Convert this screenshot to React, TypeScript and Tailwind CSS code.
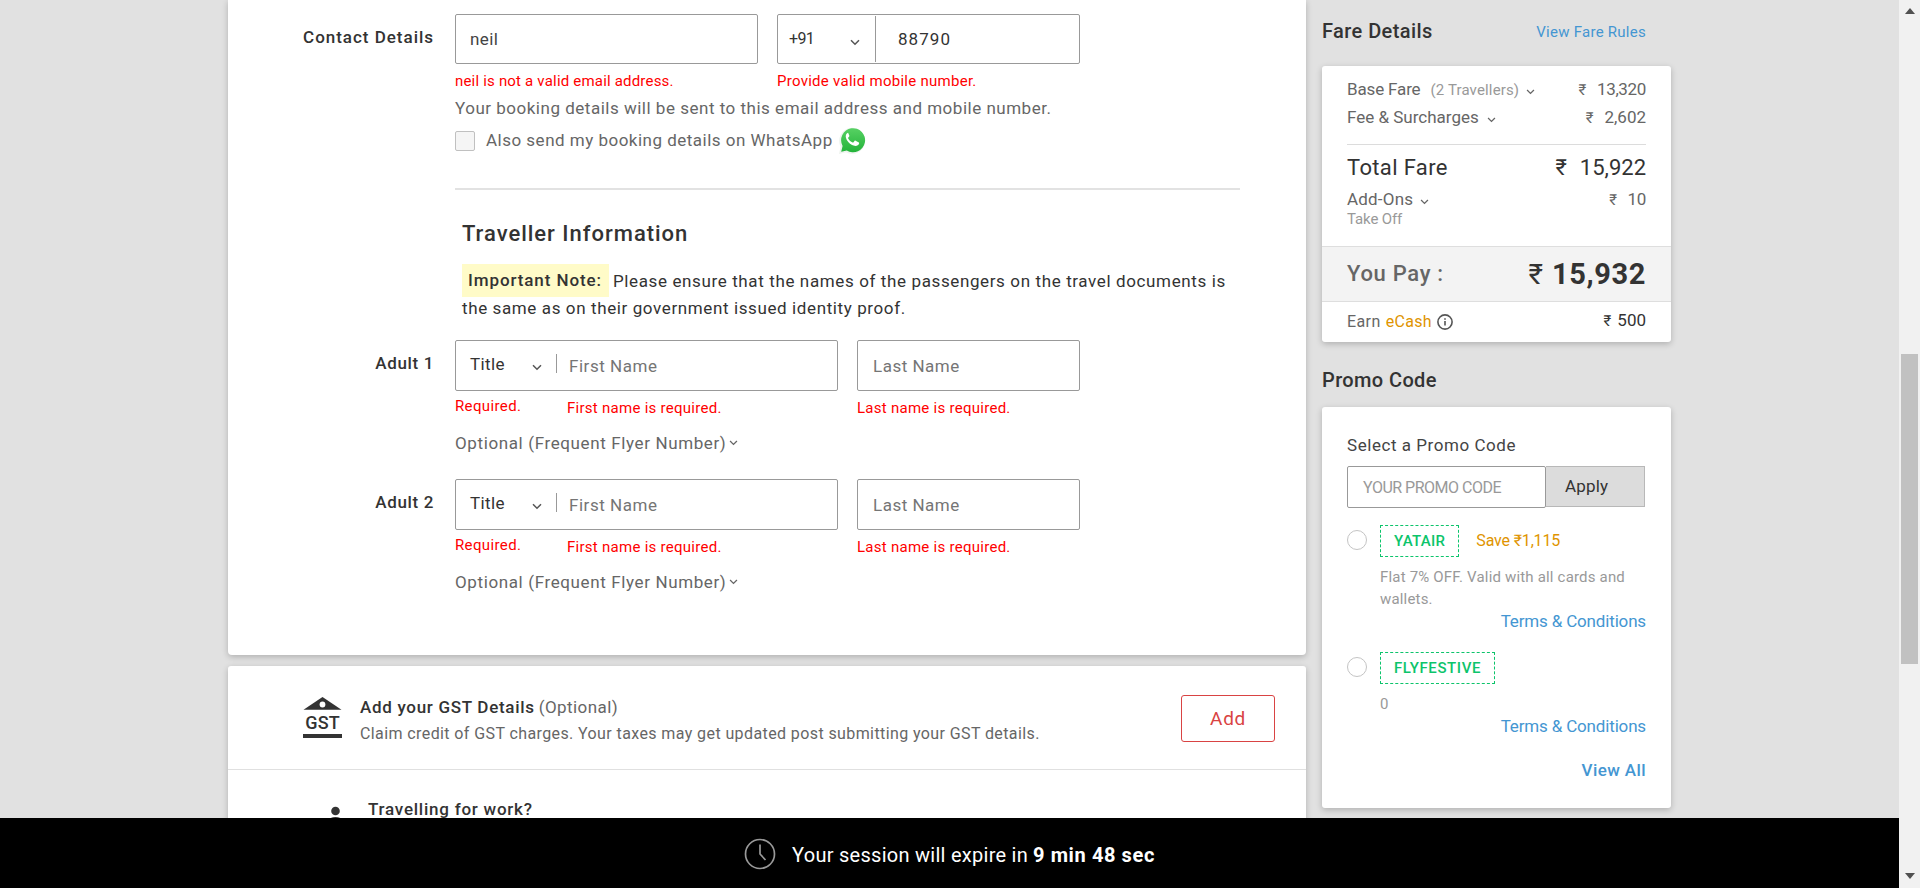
import type { ReactNode } from "react";

function Chevron({ className = "" }: { className?: string }) {
  return (
    <svg viewBox="0 0 10 7" fill="none" stroke="currentColor" strokeWidth="1.5" className={`shrink-0 ${className}`}>
      <path d="M1 1.2 5 5.2 9 1.2" />
    </svg>
  );
}

function WhatsApp() {
  return (
    <svg viewBox="0 0 28 29" className="ml-[5px] h-[29px] w-[28px] shrink-0">
      <defs>
        <linearGradient id="wa" x1="0" y1="0" x2="0" y2="1">
          <stop offset="0" stopColor="#57d163" />
          <stop offset="1" stopColor="#23b33a" />
        </linearGradient>
      </defs>
      <path d="M1 28 2.6 20.8A13 13 0 1 1 8 26.3Z" fill="#edf3ee" />
      <path d="M3.2 25.8 4.6 20A12 12 0 1 1 8.8 24.4Z" fill="url(#wa)" />
      <path
        d="M10.300 6.800c-.5 0-1 .2-1.500.8-1.500 1.700-1.300 3.900 0 6.400 1.800 2.900 4.200 4.900 7.600 5.800 1.900.5 4.400-.6 4.700-2.300.1-.5.1-.9-.2-1.100l-3.300-1.700c-.4-.2-.8-.1-1.100.3l-1 1.300c-.3.3-.5.3-.9.1-1.900-.8-3.400-2.200-4.400-4-.2-.3-.1-.6.1-.8l.9-1.100c.2-.3.2-.6.1-.9l-1.200-2.900c-.2-.4-.5-.6-.9-.6Z"
        fill="#fff"
      />
    </svg>
  );
}

function Traveller({ label, className }: { label: string; className: string }) {
  return (
    <section className={`flex ${className}`}>
      <div className="mt-[11px] w-[206px] shrink-0 text-right font-medium leading-6 tracking-[0.64px] text-[#333]">{label}</div>
      <div className="ml-[21px]">
        <div className="flex gap-[19px]">
          <div>
            <div className="flex h-[51px] w-[383px] rounded-[2px] border border-[#999]">
              <span className="ml-[14px] mt-[11px] w-[62px] leading-6 tracking-[0.4px] text-[#333]">Title</span>
              <Chevron className="mt-[23px] h-[7px] w-[10px] text-[#555]" />
              <span className="ml-[14px] mt-[13px] h-[19px] w-px bg-[#999]" />
              <span className="ml-[12px] mt-[13px] leading-6 tracking-[0.54px] text-[#757575]">First Name</span>
            </div>
            <div className="flex h-[27px] text-[15px] leading-5 text-[#f00]">
              <span className="mt-[5px] w-[112px] tracking-[0.38px]">Required.</span>
              <span className="mt-[7px] tracking-[0.27px]">First name is required.</span>
            </div>
          </div>
          <div>
            <div className="flex h-[51px] w-[223px] rounded-[2px] border border-[#999]">
              <span className="ml-[15px] mt-[13px] leading-6 tracking-[0.5px] text-[#757575]">Last Name</span>
            </div>
            <div className="mt-[7px] text-[15px] leading-5 tracking-[0.27px] text-[#f00]">Last name is required.</div>
          </div>
        </div>
        <div className="mt-[13px] flex leading-6 tracking-[0.62px]">
          Optional (Frequent Flyer Number)
          <Chevron className="ml-[3px] mt-[9px] h-[6px] w-[9px]" />
        </div>
      </div>
    </section>
  );
}

function Amount({ value, className = "" }: { value: string; className?: string }) {
  return (
    <span className={`flex items-baseline ${className}`}>
      <span className="mr-[11px] text-[15px]">₹</span>
      {value}
    </span>
  );
}

function Promo({ code, note, save, className }: { code: ReactNode; note: string; save?: string; className: string }) {
  return (
    <div className={className}>
      <div className="flex h-8 items-center">
        <span className="-mt-[2px] size-5 rounded-full border border-[#c4c4c4] bg-white" />
        <span className="ml-[13px] flex h-8 items-center border border-dashed border-[#0cc46b] px-[13px] text-[15px] font-medium text-[#0cc46b]">
          {code}
        </span>
        {save && <span className="ml-[17px] text-[16px] tracking-[-0.16px] text-[#e09400]">{save}</span>}
      </div>
      <p className="ml-[33px] mt-[9px] w-[264px] text-[15px] leading-[22px] tracking-[0.18px] text-[#999]">{note}</p>
      <div className="-mt-px text-right leading-6 tracking-[-0.16px] text-[#4496d2]">Terms &amp; Conditions</div>
    </div>
  );
}

export default function App() {
  return (
    <div className="flex h-[888px] w-full overflow-hidden bg-[#e1e1e1] font-['Roboto','Open_Sans',sans-serif] text-[17px] text-[#666]">
      <div className="flex min-w-0 flex-1 flex-col">
        <div className="flex h-[818px] items-start overflow-hidden pl-[228px]">
          <main className="w-[1078px] shrink-0">
            <div className="h-[655px] rounded-b-[4px] bg-white pt-[14px] shadow-[0_2px_6px_rgba(0,0,0,0.22)]">
              <section className="flex">
                <div className="mt-[11px] w-[206px] shrink-0 text-right font-medium leading-6 tracking-[0.98px] text-[#333]">
                  Contact Details
                </div>
                <div className="ml-[21px] w-[785px]">
                  <div className="flex gap-[19px]">
                    <div className="w-[303px]">
                      <div className="h-[50px] rounded-[2px] border border-[#999] pl-[14px] leading-[48px] tracking-[0.44px] text-[#444]">neil</div>
                      <div className="mt-[7px] whitespace-nowrap text-[15px] leading-5 tracking-[0.19px] text-[#f00]">
                        neil is not a valid email address.
                      </div>
                    </div>
                    <div className="w-[303px]">
                      <div className="flex h-[50px] rounded-[2px] border border-[#999] leading-[48px] text-[#333]">
                        <span className="ml-[11px] w-[61px] text-[16px] tracking-[-0.6px]">+91</span>
                        <Chevron className="mt-[24px] h-[7px] w-[10px] text-[#555]" />
                        <span className="ml-[15px] mt-px h-[46px] w-px bg-[#999]" />
                        <span className="ml-[22px] tracking-[1.05px]">88790</span>
                      </div>
                      <div className="mt-[7px] text-[15px] leading-5 tracking-[0.27px] text-[#f00]">Provide valid mobile number.</div>
                    </div>
                  </div>
                  <div className="mt-[5px] leading-6 tracking-[0.51px]">
                    Your booking details will be sent to this email address and mobile number.
                  </div>
                  <div className="mt-2 flex h-6 items-center leading-6">
                    <span className="mt-[2px] h-5 w-5 rounded-[2px] border border-[#c0c0c0] bg-[#f5f5f5]" />
                    <span className="ml-[11px] tracking-[0.49px]">Also send my booking details on WhatsApp</span>
                    <WhatsApp />
                  </div>
                  <div className="mt-9 h-[2px] bg-[#e2e2e2]" />
                  <div className="ml-[7px] text-[#333]">
                    <h2 className="mt-[29px] text-[22px] font-medium leading-[30px] tracking-[0.98px]">Traveller Information</h2>
                    <div className="mt-[15px] flex whitespace-nowrap leading-[33px]">
                      <strong className="w-[147px] bg-[#fffbc8] pl-[6px] font-medium tracking-[0.9px]">Important Note:</strong>
                      <span className="ml-[4px] mt-px h-8 tracking-[0.62px]">
                        Please ensure that the names of the passengers on the travel documents is
                      </span>
                    </div>
                    <div className="-mt-[2px] leading-[26px] tracking-[0.61px]">the same as on their government issued identity proof.</div>
                  </div>
                </div>
              </section>
              <Traveller label="Adult 1" className="mt-[19px]" />
              <Traveller label="Adult 2" className="mt-[24px]" />
            </div>

            <div className="mt-[11px] h-[200px] rounded-[3px] bg-white shadow-[0_2px_6px_rgba(0,0,0,0.22)]">
              <section className="flex h-[104px] border-b border-[#e0e0e0] pl-[75px] pr-[31px] pt-[29px]">
                <div className="mt-[1px] flex w-[39px] flex-col items-center">
                  <svg viewBox="0 0 39 14" className="h-[14px] w-[39px] shrink-0">
                    <path d="M19.500 1 38.500 13.800H.5Z" fill="#333" />
                    <circle cx="19.500" cy="8.500" r="2.900" fill="#fff" />
                  </svg>
                  <span className="mt-[3px] h-[21px] text-[18px] font-medium leading-[19px] tracking-[0.1px] text-[#333]">GST</span>
                  <span className="h-1 w-[39px] bg-[#333]" />
                </div>
                <div className="ml-[18px] flex-1">
                  <div className="leading-6">
                    <span className="font-medium tracking-[0.7px] text-[#333]">Add your GST Details</span>
                    <span className="ml-[4px] tracking-[0.43px]">(Optional)</span>
                  </div>
                  <div className="mt-[3px] text-[16px] leading-6 tracking-[0.4px]">
                    Claim credit of GST charges. Your taxes may get updated post submitting your GST details.
                  </div>
                </div>
                <button className="h-[47px] w-[94px] rounded-[3px] border border-[#d94343] pt-[2px] text-[19px] tracking-[0.7px] text-[#d94343]">Add</button>
              </section>
              <section className="flex pl-[102px]">
                <svg viewBox="0 0 12 16" className="mt-[36px] h-4 w-3" fill="#333">
                  <circle cx="5.500" cy="5" r="4.300" />
                  <ellipse cx="5.500" cy="16" rx="8" ry="5" />
                </svg>
                <div className="ml-[26px] mt-[27px] font-medium leading-6 tracking-[0.76px] text-[#333]">Travelling for work?</div>
              </section>
            </div>
          </main>

          <aside className="ml-4 w-[349px] shrink-0 pt-[17px]">
            <div className="flex items-baseline justify-between pr-[25px]">
              <h2 className="text-[20px] font-medium leading-7 tracking-[0.42px] text-[#333]">Fare Details</h2>
              <span className="relative -top-px text-[15px] tracking-[0.26px] text-[#4496d2]">View Fare Rules</span>
            </div>
            <div className="mt-[21px] h-[276px] rounded-[3px] bg-white pt-[11px] shadow-[0_2px_6px_rgba(0,0,0,0.22)]">
              <div className="px-[25px] leading-6">
                <div className="flex h-6 items-baseline justify-between">
                  <div className="flex items-baseline">
                    <span className="tracking-[-0.15px]">Base Fare</span>
                    <span className="ml-[10px] text-[15px] tracking-[0.15px] text-[#999]">(2 Travellers)</span>
                    <Chevron className="mb-[3px] ml-[7px] h-[6px] w-[9px]" />
                  </div>
                  <Amount value="13,320" className="tracking-[-0.35px]" />
                </div>
                <div className="mt-1 flex h-6 items-baseline justify-between">
                  <div className="flex items-baseline">
                    <span>Fee &amp; Surcharges</span>
                    <Chevron className="mb-[3px] ml-[8px] h-[6px] w-[9px]" />
                  </div>
                  <Amount value="2,602" />
                </div>
                <div className="mt-[15px] h-px bg-[#dcdcdc]" />
                <div className="mt-[8px] flex h-[30px] items-baseline justify-between text-[22px] leading-[30px] text-[#333]">
                  <span className="tracking-[0.35px]">Total Fare</span>
                  <span className="flex items-baseline">
                    <span className="mr-[13px]">₹</span>15,922
                  </span>
                </div>
                <div className="mt-[4px] flex h-6 items-baseline justify-between">
                  <div className="flex items-baseline">
                    <span className="tracking-[0.2px]">Add-Ons</span>
                    <Chevron className="mb-[3px] ml-[7px] h-[6px] w-[9px]" />
                  </div>
                  <Amount value="10" className="tracking-[-0.35px]" />
                </div>
                <div className="-mt-[2px] text-[15px] leading-5 tracking-[-0.12px] text-[#999]">Take Off</div>
              </div>
              <div className="mt-[17px] flex h-[56px] justify-between border-y border-[#dedede] bg-[#f3f3f3] px-[25px]">
                <span className="pt-[12px] text-[22px] font-medium leading-[30px] tracking-[0.68px]">You Pay :</span>
                <span className="flex items-baseline text-[29px] font-bold leading-[55px] text-[#333]">
                  <span className="mr-[9px] text-[28px] font-normal">₹</span>
                  <span className="tracking-[0.6px]">15,932</span>
                </span>
              </div>
              <div className="mt-[6px] flex items-center justify-between px-[25px] leading-6">
                <div className="mt-[2px] flex items-center text-[16px] leading-[22px]">
                  <span className="tracking-[0.4px]">Earn</span>
                  <span className="ml-[5px] tracking-[0.33px] text-[#e09400]">eCash</span>
                  <svg viewBox="0 0 16 16" className="ml-[5px] size-4" fill="none" stroke="#555" strokeWidth="1.600">
                    <circle cx="8" cy="8" r="7.100" />
                    <path d="M8 7v4.500M8 4.300v1.500" />
                  </svg>
                </div>
                <div className="flex items-baseline text-[#333]">
                  <span className="mr-[6px] text-[15px]">₹</span>
                  500
                </div>
              </div>
            </div>

            <h2 className="mt-[24px] text-[20px] font-medium leading-7 tracking-[0.38px] text-[#333]">Promo Code</h2>
            <div className="mt-[13px] h-[401px] rounded-[3px] bg-white px-[25px] pt-[26px] shadow-[0_2px_6px_rgba(0,0,0,0.22)]">
              <div className="leading-6 tracking-[0.55px] text-[#444]">Select a Promo Code</div>
              <div className="mt-[9px] flex items-start">
                <div className="h-[42px] w-[199px] rounded-[2px] border border-[#999] pl-[15px] text-[16px] leading-[41px] tracking-[-0.5px] text-[#999]">
                  YOUR PROMO CODE
                </div>
                <div className="h-[41px] w-[99px] border border-l-0 border-[#b8b8b8] bg-[#dcdcdc] pl-[19px] leading-[39px] tracking-[0.2px] text-[#333]">Apply</div>
              </div>
              <Promo
                code={<span className="tracking-[0.31px]">YATAIR</span>}
                save="Save ₹1,115"
                note="Flat 7% OFF. Valid with all cards and wallets."
                className="mt-[17px]"
              />
              <Promo code={<span className="tracking-[0.6px]">FLYFESTIVE</span>} note="0" className="mt-[19px]" />
              <div className="mt-[20px] text-right font-medium leading-6 tracking-[0.4px] text-[#4496d2]">View All</div>
            </div>
          </aside>
        </div>

        <footer className="flex h-[70px] items-center justify-center bg-black pt-[3px] text-[20px] text-white">
          <svg viewBox="0 0 32 32" className="-mt-[2px] size-8" fill="none" stroke="#999" strokeWidth="1.700">
            <circle cx="16" cy="16" r="14.500" />
            <path d="M16 6.500V16l5.500 6" />
          </svg>
          <span className="ml-4 mt-px tracking-[0.27px]">Your session will expire in</span>
          <span className="ml-[5px] mt-px font-bold tracking-[0.6px]">9 min 48 sec</span>
        </footer>
      </div>

      <div className="flex w-[21px] shrink-0 flex-col items-center bg-[#f1f1f1]">
        <svg viewBox="0 0 10 6" className="mt-[8px] h-[6px] w-[10px]" fill="#505050">
          <path d="M0 6 5 0 10 6Z" />
        </svg>
        <div className="mt-[340px] h-[310px] w-[17px] bg-[#c1c1c1]" />
        <svg viewBox="0 0 10 6" className="mb-[9px] mt-auto h-[6px] w-[10px]" fill="#505050">
          <path d="M0 0 5 6 10 0Z" />
        </svg>
      </div>
    </div>
  );
}
